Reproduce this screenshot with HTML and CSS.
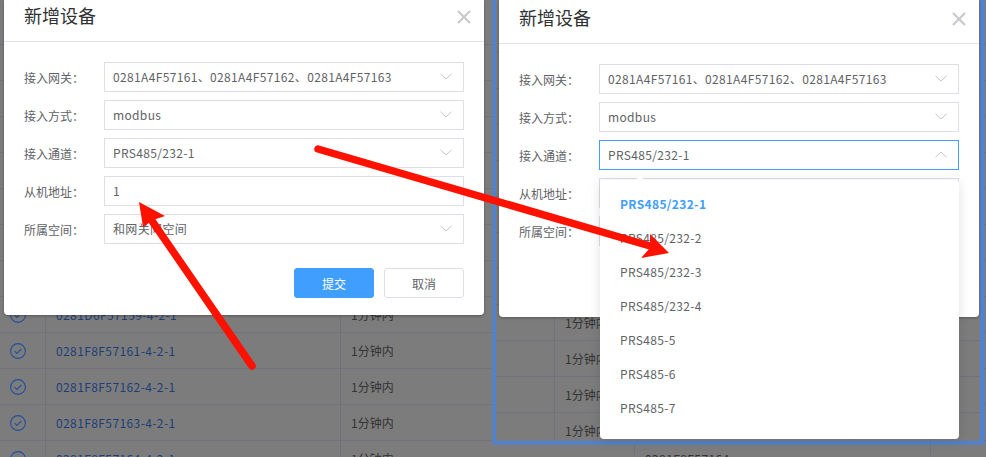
FILE: index.html
```html
<!DOCTYPE html>
<html lang="zh-CN">
<head>
  <meta charset="UTF-8">
  <meta name="viewport" content="width=device-width, initial-scale=1.0">
  <title>新增设备</title>
  <link rel="stylesheet" href="styles.css">
</head>
<body>
  <!-- device table behind the dialogs -->
  <div class="table">
    <div class="row"></div>
    <div class="row"></div>
    <div class="row"></div>
    <div class="row"></div>
    <div class="row"></div>
    <div class="row"></div>
    <div class="row"></div>
    <div class="row"></div>
    <div class="row">
      <span class="cell cell-check"><svg class="check" viewBox="0 0 16 16"><circle cx="8" cy="8" r="7.4"/><path d="M4.6 8.2l2.4 2.3 4.4-4.6"/></svg></span>
      <span class="cell cell-name">0281D6F57159-4-2-1</span>
      <span class="cell cell-time">1分钟内</span>
      <span class="cell"></span>
      <span class="cell"></span>
    </div>
    <div class="row">
      <span class="cell cell-check"><svg class="check" viewBox="0 0 16 16"><circle cx="8" cy="8" r="7.4"/><path d="M4.6 8.2l2.4 2.3 4.4-4.6"/></svg></span>
      <span class="cell cell-name">0281F8F57161-4-2-1</span>
      <span class="cell cell-time">1分钟内</span>
      <span class="cell"></span>
      <span class="cell"></span>
    </div>
    <div class="row">
      <span class="cell cell-check"><svg class="check" viewBox="0 0 16 16"><circle cx="8" cy="8" r="7.4"/><path d="M4.6 8.2l2.4 2.3 4.4-4.6"/></svg></span>
      <span class="cell cell-name">0281F8F57162-4-2-1</span>
      <span class="cell cell-time">1分钟内</span>
      <span class="cell"></span>
      <span class="cell"></span>
    </div>
    <div class="row">
      <span class="cell cell-check"><svg class="check" viewBox="0 0 16 16"><circle cx="8" cy="8" r="7.4"/><path d="M4.6 8.2l2.4 2.3 4.4-4.6"/></svg></span>
      <span class="cell cell-name">0281F8F57163-4-2-1</span>
      <span class="cell cell-time">1分钟内</span>
      <span class="cell"></span>
      <span class="cell"></span>
    </div>
    <div class="row">
      <span class="cell cell-check"><svg class="check" viewBox="0 0 16 16"><circle cx="8" cy="8" r="7.4"/><path d="M4.6 8.2l2.4 2.3 4.4-4.6"/></svg></span>
      <span class="cell cell-name">0281F8F57164-4-2-1</span>
      <span class="cell cell-time">1分钟内</span>
      <span class="cell cell-gateway">0281F8F57164</span>
      <span class="cell"></span>
    </div>
  </div>

  <!-- left dialog -->
  <div class="modal modal-left">
    <div class="modal-header">
      <span class="modal-title">新增设备</span>
      <svg class="modal-close" viewBox="0 0 14 14"><path d="M1 1l12 12M13 1L1 13"/></svg>
    </div>
    <div class="modal-body">
      <div class="field">
        <label class="field-label">接入网关：</label>
        <div class="input"><span>0281A4F57161、0281A4F57162、0281A4F57163</span><svg class="chevron" viewBox="0 0 12 7"><path d="M.5 .8L6 6l5.500-5.200"/></svg></div>
      </div>
      <div class="field">
        <label class="field-label">接入方式：</label>
        <div class="input"><span>modbus</span><svg class="chevron" viewBox="0 0 12 7"><path d="M.5 .8L6 6l5.500-5.200"/></svg></div>
      </div>
      <div class="field">
        <label class="field-label">接入通道：</label>
        <div class="input"><span>PRS485/232-1</span><svg class="chevron" viewBox="0 0 12 7"><path d="M.5 .8L6 6l5.500-5.200"/></svg></div>
      </div>
      <div class="field">
        <label class="field-label">从机地址：</label>
        <div class="input"><span>1</span></div>
      </div>
      <div class="field">
        <label class="field-label">所属空间：</label>
        <div class="input"><span>和网关同空间</span><svg class="chevron" viewBox="0 0 12 7"><path d="M.5 .8L6 6l5.500-5.200"/></svg></div>
      </div>
    </div>
    <div class="modal-footer">
      <button class="btn btn-primary">提交</button>
      <button class="btn">取消</button>
    </div>
  </div>

  <!-- right: pasted second screenshot in a blue frame -->
  <div class="frame">
    <div class="table frame-table">
      <div class="row"></div>
      <div class="row"></div>
      <div class="row"></div>
      <div class="row"></div>
      <div class="row"></div>
      <div class="row"></div>
      <div class="row"></div>
      <div class="row"></div>
      <div class="row"><span class="cell frame-first"></span><span class="cell cell-time">1分钟内</span><span class="cell"></span><span class="cell"></span></div>
      <div class="row"><span class="cell frame-first"></span><span class="cell cell-time">1分钟内</span><span class="cell"></span><span class="cell"></span></div>
      <div class="row"><span class="cell frame-first"></span><span class="cell cell-time">1分钟内</span><span class="cell"></span><span class="cell"></span></div>
      <div class="row"><span class="cell frame-first"></span><span class="cell cell-time">1分钟内</span><span class="cell"></span><span class="cell"></span></div>
    </div>

    <div class="modal modal-right">
      <div class="modal-header">
        <span class="modal-title">新增设备</span>
        <svg class="modal-close" viewBox="0 0 14 14"><path d="M1 1l12 12M13 1L1 13"/></svg>
      </div>
      <div class="modal-body">
        <div class="field">
          <label class="field-label">接入网关：</label>
          <div class="input"><span>0281A4F57161、0281A4F57162、0281A4F57163</span><svg class="chevron" viewBox="0 0 12 7"><path d="M.5 .8L6 6l5.500-5.200"/></svg></div>
        </div>
        <div class="field">
          <label class="field-label">接入方式：</label>
          <div class="input"><span>modbus</span><svg class="chevron" viewBox="0 0 12 7"><path d="M.5 .8L6 6l5.500-5.200"/></svg></div>
        </div>
        <div class="field">
          <label class="field-label">接入通道：</label>
          <div class="input input-focus"><span>PRS485/232-1</span><svg class="chevron" viewBox="0 0 12 7"><path d="M.5 6.200L6 1l5.500 5.200"/></svg></div>
        </div>
        <div class="field">
          <label class="field-label">从机地址：</label>
          <div class="input"><span>1</span></div>
        </div>
        <div class="field">
          <label class="field-label">所属空间：</label>
          <div class="input"><span>和网关同空间</span></div>
        </div>
      </div>
      <div class="modal-footer">
        <button class="btn btn-primary">提交</button>
        <button class="btn">取消</button>
      </div>

      <div class="dropdown">
        <div class="dropdown-caret"></div>
        <div class="option option-active">PRS485/232-1</div>
        <div class="option">PRS485/232-2</div>
        <div class="option">PRS485/232-3</div>
        <div class="option">PRS485/232-4</div>
        <div class="option">PRS485-5</div>
        <div class="option">PRS485-6</div>
        <div class="option">PRS485-7</div>
      </div>
    </div>
  </div>

  <!-- red annotation arrows, drawn over everything -->
  <svg class="arrows" viewBox="0 0 986 457">
    <path class="arrow-line" d="M252 366L150 218"/>
    <path class="arrow-head" d="M139 202L165 216L153 220L143 227Z"/>
    <path class="arrow-line" d="M318 149L650 246"/>
    <path class="arrow-head" d="M669 253L641 258L650 248L650 234Z"/>
  </svg>
</body>
</html>
```

FILE: styles.css
```css
* {
  box-sizing: border-box;
}
body {
  position: relative;
  width: 986px;
  height: 457px;
  margin: 0;
  overflow: hidden;
  background-color: #7c7c7c;
  color: #606266;
  font-family: "Noto Sans CJK SC", "Noto Sans", sans-serif;
  font-size: 12px;
}

/* table */
.table {
  padding-top: 9px;
}
.row {
  display: grid;
  grid-template-columns: 46px 295px 294px 296px 1fr;
  height: 36px;
  border-bottom: 1px solid #70727a;
  align-items: center;
}
.cell {
  display: flex;
  align-items: center;
  height: 100%;
  padding-left: 10px;
  border-right: 1px solid #70727a;
  color: #333;
  letter-spacing: 0.4px;
  white-space: nowrap;
}
.cell:last-child {
  border-right: 0;
}
.check {
  width: 16px;
  height: 16px;
  fill: none;
  stroke: #1f4f9e;
  stroke-width: 1.1;
}
.cell-name {
  color: #1c3f78;
}
.cell-time {
  letter-spacing: 0;
}

/* blue frame on the right */
.frame {
  position: absolute;
  top: -3px;
  left: 493px;
  width: 491px;
  height: 447px;
  border: 3px solid #4f82d0;
  border-right-width: 4px;
  background-color: #7c7c7c;
  box-shadow: 0 0 3px #4f82d0;
}
.frame-table {
  height: 100%;
  padding-top: 17px;
  overflow: hidden;
}
.frame-table .row {
  grid-template-columns: 59px 295px 81px 1fr;
}
.frame-first {
  padding: 0;
}

/* dialog */
.modal {
  position: absolute;
  width: 480px;
  height: 315px;
  background-color: #fff;
  border-radius: 0 0 4px 4px;
  box-shadow: 0 1px 3px rgba(0, 0, 0, 0.3);
}
.modal-left {
  top: 0;
  left: 4px;
}
.modal-right {
  top: 0;
  left: 3px;
  height: 317px;
}
.modal-header {
  display: flex;
  justify-content: space-between;
  height: 42px;
  padding: 3px 13px 0 20px;
  border-bottom: 1px solid #dfe1e8;
}
.modal-right .modal-header {
  height: 44px;
  padding-top: 5px;
}
.modal-title {
  color: #303133;
  font-size: 18px;
  line-height: 24px;
}
.modal-close {
  width: 14px;
  height: 14px;
  margin-top: 7px;
  fill: none;
  stroke: #c8cacf;
  stroke-width: 2.2;
}
.modal-body {
  display: flex;
  flex-direction: column;
  gap: 8px;
  padding: 20px 20px 0;
}
.field {
  display: flex;
  align-items: center;
}
.field-label {
  width: 80px;
  flex-shrink: 0;
}
.input {
  display: flex;
  flex: 1;
  align-items: center;
  justify-content: space-between;
  height: 30px;
  padding: 0 11px 1px 8px;
  border: 1px solid #dcdfe6;
  letter-spacing: 0.35px;
}
.input-focus {
  border-color: #409eff;
}
.chevron {
  width: 12px;
  height: 7px;
  fill: none;
  stroke: #c0c4cc;
  stroke-width: 1;
}
.modal-footer {
  display: flex;
  justify-content: flex-end;
  gap: 10px;
  padding: 24px 20px 0;
}
.btn {
  width: 80px;
  height: 30px;
  padding: 0;
  background-color: #fff;
  border: 1px solid #dcdfe6;
  border-radius: 3px;
  color: #606266;
  font-family: inherit;
  font-size: 12px;
}
.btn-primary {
  background-color: #409eff;
  border-color: #409eff;
  color: #fff;
}

/* select popup */
.dropdown {
  position: absolute;
  top: 180px;
  left: 101px;
  width: 359px;
  height: 259px;
  padding: 7px 0;
  background-color: #fff;
  border-radius: 4px;
  box-shadow: 0 2px 12px rgba(0, 0, 0, 0.12);
}
.dropdown-caret {
  position: absolute;
  top: -3px;
  left: 37px;
  width: 6px;
  height: 6px;
  background-color: #fff;
  transform: rotate(45deg);
}
.option {
  height: 34px;
  padding-left: 20px;
  line-height: 34px;
  letter-spacing: 0.35px;
}
.option-active {
  color: #409eff;
  font-weight: 700;
}

/* annotation arrows */
.arrows {
  position: absolute;
  top: 0;
  left: 0;
  width: 986px;
  height: 457px;
}
.arrow-line {
  fill: none;
  stroke: #ff1100;
  stroke-width: 7.500;
  stroke-linecap: round;
}
.arrow-head {
  fill: #ff1100;
}
```
